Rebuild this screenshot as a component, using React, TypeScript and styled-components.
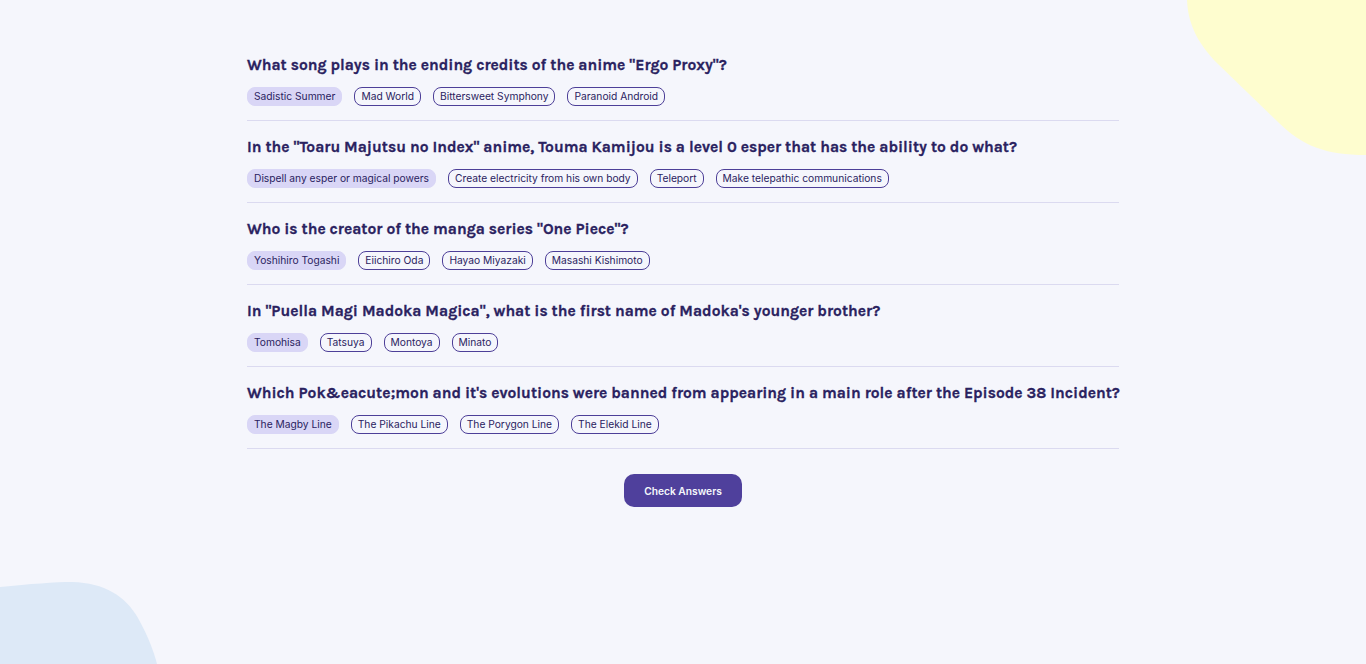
import React from "react";
import styled, { createGlobalStyle } from "styled-components";

const Global = createGlobalStyle`
  html, body { margin: 0; padding: 0; background: #F5F6FC; }
  * { box-sizing: border-box; }
`;

const Page = styled.div`
  position: relative;
  min-height: 100vh;
  height: 664px;
  overflow: hidden;
  background: #F5F6FC;
  display: flex;
  flex-direction: column;
  align-items: center;
  padding-top: 39px;
`;

const BlobTop = styled.svg`
  position: absolute;
  top: 0;
  right: 0;
`;

const BlobBottom = styled.svg`
  position: absolute;
  left: 0;
  bottom: 0;
`;

const Quiz = styled.div`
  position: relative;
  width: 872px;
  display: flex;
  flex-direction: column;
`;

const Question = styled.div`
  padding: 16px 0 14px;
  border-bottom: 1.5px solid #DBDAF0;
`;

const Title = styled.h2`
  margin: 0;
  font-family: "Karla", "Lato", "Noto Sans", sans-serif;
  font-weight: 700;
  font-size: 15.6px;
  line-height: 20px;
  color: #2A2260;
  white-space: nowrap;
  -webkit-text-stroke: 0.3px #2A2260;
`;

const Answers = styled.div`
  display: flex;
  gap: 12px;
  margin-top: 12px;
`;

const Chip = styled.button<{ $selected?: boolean }>`
  font-family: "Inter", "Liberation Sans", sans-serif;
  font-size: 10.24px;
  line-height: 17px;
  height: 19px;
  padding: 0 6px;
  border-radius: 8px;
  color: #2A2260;
  background: ${(p) => (p.$selected ? "#D9D6F6" : "transparent")};
  border: 0.8px solid ${(p) => (p.$selected ? "#D9D6F6" : "#4D3F98")};
  cursor: pointer;
`;

const CheckButton = styled.button`
  margin-top: 25px;
  width: 118px;
  height: 33px;
  border: none;
  border-radius: 10px;
  background: #4F409C;
  color: #F5F7FB;
  font-family: "Inter", "Liberation Sans", sans-serif;
  font-weight: 600;
  font-size: 10.24px;
  cursor: pointer;
`;

const questions = [
  {
    q: 'What song plays in the ending credits of the anime "Ergo Proxy"?',
    a: ["Sadistic Summer", "Mad World", "Bittersweet Symphony", "Paranoid Android"],
  },
  {
    q: 'In the "Toaru Majutsu no Index" anime, Touma Kamijou is a level 0 esper that has the ability to do what?',
    a: [
      "Dispell any esper or magical powers",
      "Create electricity from his own body",
      "Teleport",
      "Make telepathic communications",
    ],
  },
  {
    q: 'Who is the creator of the manga series "One Piece"?',
    a: ["Yoshihiro Togashi", "Eiichiro Oda", "Hayao Miyazaki", "Masashi Kishimoto"],
  },
  {
    q: 'In "Puella Magi Madoka Magica", what is the first name of Madoka\'s younger brother?',
    a: ["Tomohisa", "Tatsuya", "Montoya", "Minato"],
  },
  {
    q: "Which Pok&eacute;mon and it's evolutions were banned from appearing in a main role after the Episode 38 Incident?",
    a: ["The Magby Line", "The Pikachu Line", "The Porygon Line", "The Elekid Line"],
  },
];

export default function App() {
  return (
    <Page>
      <Global />
      <BlobTop width="180" height="156" viewBox="0 0 180 156">
        <path
          d="M1,0 C2,22 10,42 32,64 L92,122 C116,146 140,155 180,155 L180,0 Z"
          fill="#FEFDCF"
        />
      </BlobTop>
      <BlobBottom width="160" height="82" viewBox="0 0 160 82">
        <path
          d="M0,5 C30,2 55,0 72,0 C105,1 125,14 138,36 C148,54 154,70 157,82 L0,82 Z"
          fill="#DDE9F7"
        />
      </BlobBottom>
      <Quiz>
        {questions.map((item, i) => (
          <Question key={i}>
            <Title>{item.q}</Title>
            <Answers>
              {item.a.map((ans, j) => (
                <Chip key={j} $selected={j === 0}>
                  {ans}
                </Chip>
              ))}
            </Answers>
          </Question>
        ))}
      </Quiz>
      <CheckButton>Check Answers</CheckButton>
    </Page>
  );
}
